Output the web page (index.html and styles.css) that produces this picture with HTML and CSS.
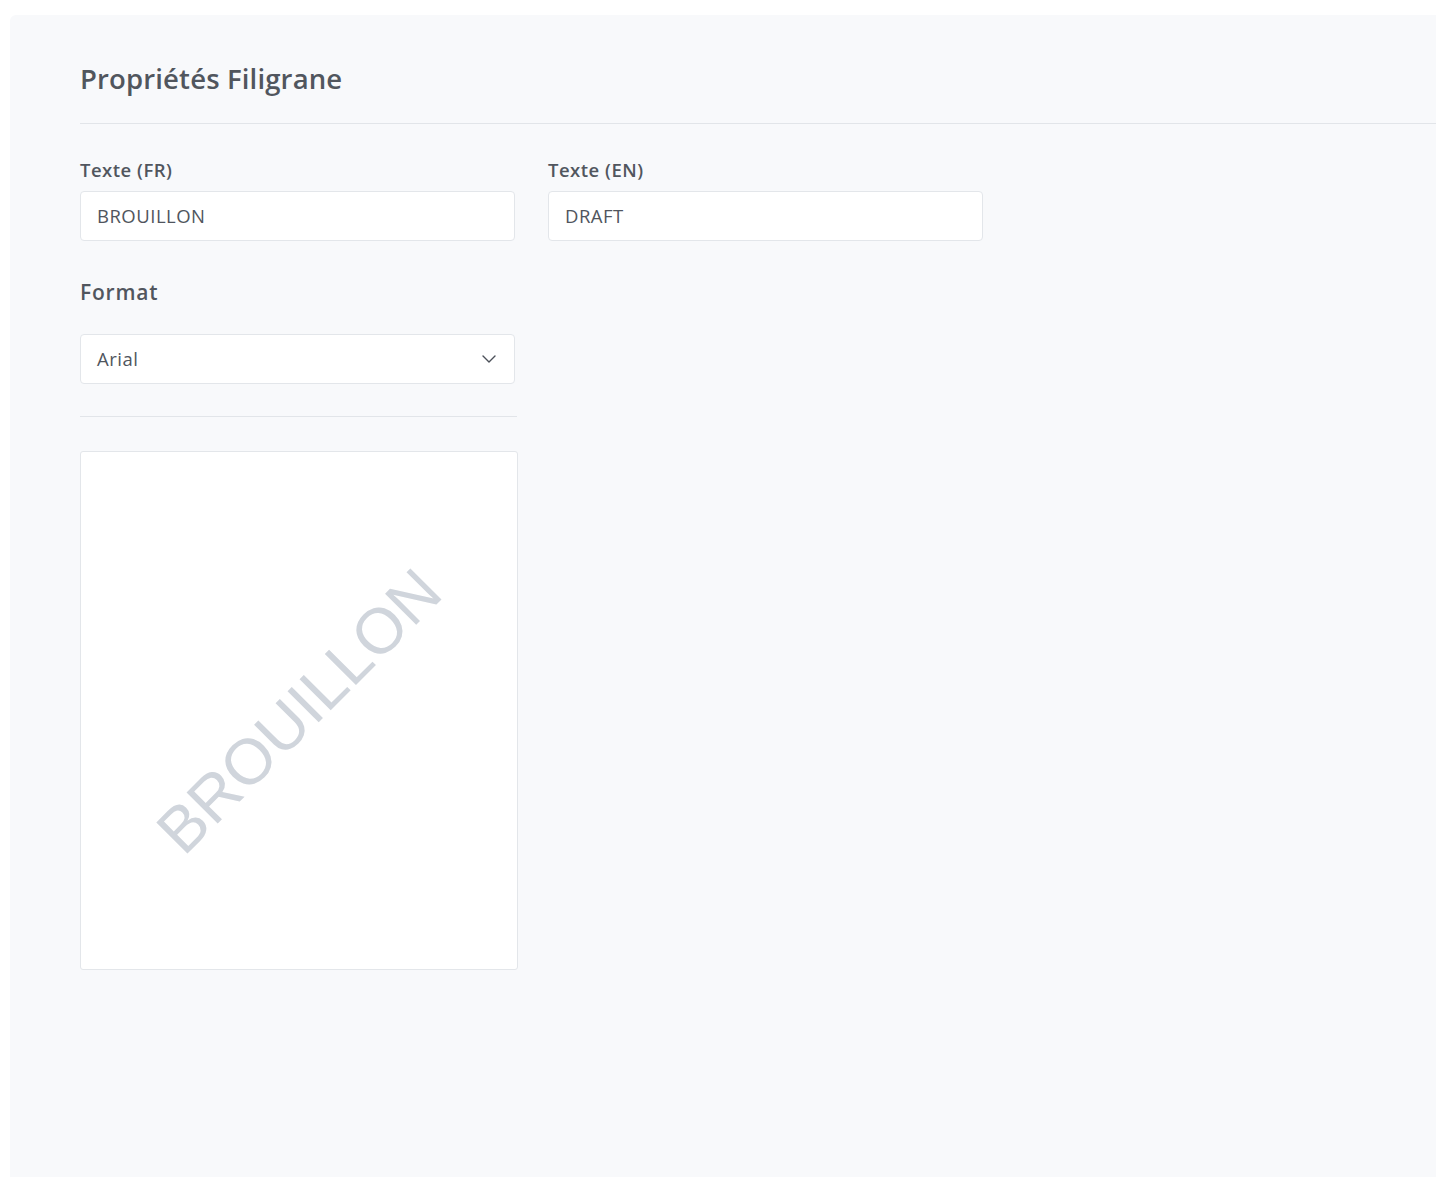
FILE: index.html
```html
<!DOCTYPE html>
<html lang="fr">
<head>
<meta charset="utf-8">
<title>Propriétés Filigrane</title>
<link rel="stylesheet" href="styles.css">
</head>
<body>
<div class="panel">
  <h1 class="title">Propriétés Filigrane</h1>
  <div class="rule"></div>
  <div class="row">
    <div class="field">
      <label class="label">Texte (FR)</label>
      <div class="input">BROUILLON</div>
    </div>
    <div class="field">
      <label class="label">Texte (EN)</label>
      <div class="input">DRAFT</div>
    </div>
  </div>
  <div class="format-label">Format</div>
  <div class="input select">
    <span>Arial</span>
    <svg class="chevron" width="14" height="8" viewBox="0 0 14 8"><path d="M1 1 L7 7 L13 1" fill="none" stroke="#4b5059" stroke-width="1.4" stroke-linecap="round" stroke-linejoin="round"/></svg>
  </div>
  <div class="rule short"></div>
  <div class="preview">
    <div class="watermark">BROUILLON</div>
  </div>
</div>
</body>
</html>
```

FILE: styles.css
```css
html, body {
  margin: 0;
  padding: 0;
  background: #ffffff;
}
body {
  font-family: "Open Sans", "Noto Sans", sans-serif;
  color: #4b5059;
  overflow: hidden;
}
.panel {
  margin: 15px 0 0 10px;
  min-height: 1162px;
  background: #f8f9fb;
  border-top-left-radius: 6px;
  padding: 46px 0 0 70px;
  box-sizing: border-box;
}
.title {
  margin: 0;
  font-size: 27.5px;
  line-height: 36px;
  font-weight: 600;
  letter-spacing: 0.15px;
  color: #51565e;
}
.rule {
  height: 1px;
  background: #e2e5e9;
  margin-top: 26px;
}
.rule.short {
  width: 437px;
  margin-top: 32px;
}
.row {
  display: flex;
  gap: 33px;
  margin-top: 34px;
}
.field {
  display: flex;
  flex-direction: column;
  width: 435px;
}
.label {
  font-size: 18.5px;
  line-height: 24px;
  font-weight: 600;
  letter-spacing: 0.5px;
  margin-bottom: 9px;
  color: #51565e;
}
.input {
  box-sizing: border-box;
  width: 435px;
  height: 50px;
  background: #ffffff;
  border: 1px solid #e3e6ea;
  border-radius: 4px;
  padding: 0 17px 0 16px;
  font-size: 18.5px;
  line-height: 48px;
  letter-spacing: 0.5px;
  color: #50555d;
}
.format-label {
  margin-top: 37px;
  font-size: 21px;
  line-height: 28px;
  font-weight: 600;
  letter-spacing: 0.8px;
  margin-bottom: 28px;
  color: #51565e;
}
.select {
  display: flex;
  align-items: center;
  justify-content: space-between;
  padding-right: 18px;
}
.chevron {
  display: block;
}
.preview {
  box-sizing: border-box;
  width: 438px;
  height: 519px;
  margin-top: 34px;
  background: #ffffff;
  border: 1px solid #e3e6ea;
  border-radius: 3px;
  display: flex;
  align-items: center;
  justify-content: center;
  overflow: hidden;
}
.watermark {
  font-family: "Liberation Sans", Arial, sans-serif;
  font-size: 64px;
  line-height: 1;
  color: #d0d5dc;
  transform: rotate(-45deg);
  white-space: nowrap;
}
```
